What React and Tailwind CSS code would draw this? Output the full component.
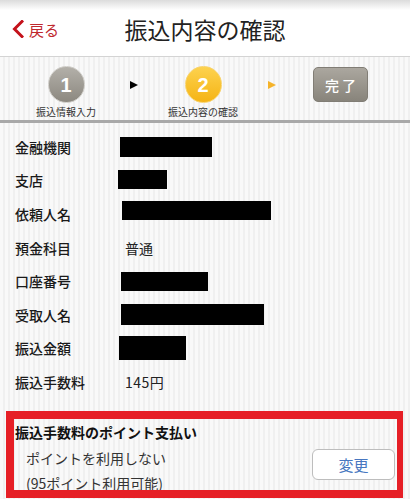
import React from "react";

const font = { fontFamily: '"Noto Sans CJK JP", "Noto Sans", sans-serif' };

function Row({ label, children, className = "" }) {
  return (
    <div className={"flex items-center h-[33.6px] " + className}>
      <div className="w-[104px] pl-[15px] text-[14px] text-[#1a1a1a] font-medium leading-none shrink-0">
        {label}
      </div>
      {children}
    </div>
  );
}

function Redact({ w, h, ml = 0, mb = 0 }) {
  return (
    <div
      className="bg-black shrink-0"
      style={{ width: w, height: h, marginLeft: ml, marginBottom: mb }}
    />
  );
}

export default function App() {
  return (
    <div
      className="w-[410px] h-[499px] overflow-hidden bg-[repeating-linear-gradient(90deg,#f9f9f9_0_3px,#f0f0f0_3px_5px)]"
      style={font}
    >
      {/* Header */}
      <div className="h-[57px] bg-[linear-gradient(#dcdcdc,#ffffff_10px)] border-b border-[#d4d4d4] grid grid-cols-[1fr_auto_1fr] items-center">
        <div className="flex items-center pl-[12px] pt-[2px]">
          <svg width="12" height="18" viewBox="0 0 12 18" className="shrink-0">
            <polyline
              points="10,1.5 2.5,9 10,16.5"
              fill="none"
              stroke="#c4121b"
              strokeWidth="3"
              strokeLinecap="square"
            />
          </svg>
          <span className="ml-[5px] text-[15px] text-[#c0282e] leading-none">戻る</span>
        </div>
        <div className="text-[23px] text-[#222] leading-none pt-[2px]">振込内容の確認</div>
        <div />
      </div>

      {/* Steps */}
      <div className="h-[66px] border-b-[3px] border-[#a9a9a9] flex items-start pl-[26px] pt-[9px]">
        <div className="w-[80px] flex flex-col items-center">
          <div className="w-[37px] h-[37px] rounded-full bg-[linear-gradient(#b3b0a9,#8c8880)] border border-[#cfcdc8] flex items-center justify-center text-white text-[20px] font-bold leading-none" style={{ fontFamily: '"Liberation Sans", sans-serif' }}>
            1
          </div>
          <div className="mt-[4px] text-[10px] text-[#333] leading-none whitespace-nowrap">振込情報入力</div>
        </div>
        <div className="ml-[24px] mt-[15px] w-0 h-0 border-y-[4px] border-y-transparent border-l-[8px] border-l-black" />
        <div className="ml-[25px] w-[80px] flex flex-col items-center">
          <div className="w-[37px] h-[37px] rounded-full bg-[linear-gradient(#fdd24e,#f5b415)] border border-[#f8d36c] flex items-center justify-center text-white text-[20px] font-bold leading-none" style={{ fontFamily: '"Liberation Sans", sans-serif' }}>
            2
          </div>
          <div className="mt-[4px] text-[10px] text-[#333] leading-none whitespace-nowrap">振込内容の確認</div>
        </div>
        <div className="ml-[25px] mt-[15px] w-0 h-0 border-y-[4px] border-y-transparent border-l-[8px] border-l-[#f5b32a]" />
        <div className="ml-[37px] mt-[1px] w-[55px] h-[35px] rounded-[5px] bg-[linear-gradient(#aba79f,#88847b)] border border-[#817d75] flex items-center justify-center text-white text-[14px] font-medium leading-none tracking-[3px] pl-[3px]">
          完了
        </div>
      </div>

      {/* Rows */}
      <div className="pt-[7px]">
        <Row label="金融機関">
          <Redact w={92} h={20} ml={16} />
        </Row>
        <Row label="支店">
          <Redact w={49} h={19} ml={14} mb={2} />
        </Row>
        <Row label="依頼人名">
          <Redact w={149} h={19} ml={18} mb={7} />
        </Row>
        <Row label="預金科目">
          <span className="ml-[21px] text-[14px] text-[#222] leading-none">普通</span>
        </Row>
        <Row label="口座番号">
          <Redact w={87} h={19} ml={17} />
        </Row>
        <Row label="受取人名">
          <Redact w={143} h={21} ml={17} />
        </Row>
        <Row label="振込金額">
          <Redact w={67} h={24} ml={15} />
        </Row>
        <Row label="振込手数料">
          <span className="ml-[21px] text-[14px] text-[#222] leading-none tracking-[0.5px]">145円</span>
        </Row>
      </div>

      {/* Points box */}
      <div className="mt-[12px] ml-[6px] w-[397px] h-[87px] border-[8px] border-r-[6px] border-[#e61f26] overflow-hidden">
        <div className="flex justify-between h-full">
          <div className="pl-[1px] pt-[3px]">
            <div className="text-[14px] font-bold text-[#111] leading-[20px]">振込手数料のポイント支払い</div>
            <div className="pl-[11px] mt-[4px] text-[14px] text-[#333] leading-[25px]">ポイントを利用しない</div>
            <div className="pl-[11px] text-[14px] text-[#333] leading-[25px] whitespace-nowrap">(95ポイント利用可能)</div>
          </div>
          <div className="mt-[30px] mr-[2px] w-[83px] h-[31px] bg-white border border-[#bdbdbd] rounded-[6px] flex items-center justify-center text-[15px] text-[#4877c0] leading-none shrink-0">
            変更
          </div>
        </div>
      </div>
    </div>
  );
}
